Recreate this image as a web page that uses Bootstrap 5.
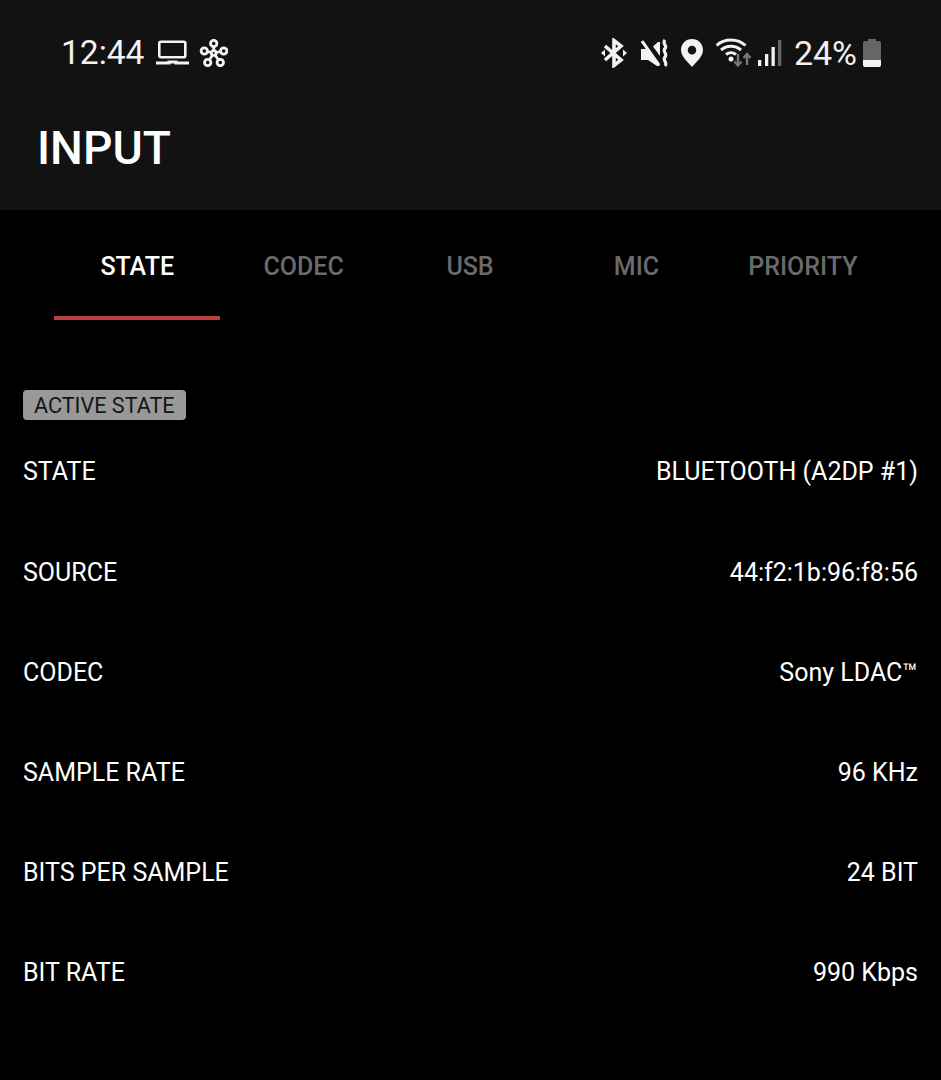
<!DOCTYPE html>
<html lang="en">
<head>
    <meta charset="UTF-8">
    <meta name="viewport" content="width=device-width, initial-scale=1.0">
    <title>Input</title>
    <link rel="stylesheet" href="https://cdn.jsdelivr.net/npm/bootstrap@5.3.0/dist/css/bootstrap.min.css">
    <style>
        body { background: #000; color: #fff; font-family: Roboto, "Liberation Sans", sans-serif; }
        .app-head { background: #121212; height: 210px; }
        .status-bar { height: 105px; padding: 0 59px 0 61px; color: #f2f2f2; }
        .status-time { font-size: 33.5px; line-height: 1; margin-right: 12px; }
        .status-pct { font-size: 34px; line-height: 1; margin: 0 5px 0 11px; }
        .st-laptop { margin-right: 9px; }
        .st-bt { margin-right: 14px; }
        .st-mute { margin-right: 13px; }
        .st-pin { margin-right: 13px; }
        .st-wifi { margin-right: 5px; }
        .app-title { font-size: 46.25px; font-weight: 500; line-height: 1; padding-left: 37px; margin: 0; padding-top: 20px; }
        .tab-strip { padding: 0 55px 0 54px; height: 110px; }
        .tab-item { flex: 1 1 0; text-align: center; font-size: 25px; font-weight: 500; color: #6a6a6a; padding-top: 38px; }
        .tab-item.on { color: #fff; border-bottom: 4px solid #b8423f; }
        .info-wrap { padding: 70px 23px 0; }
        .state-tag { display: block; width: 163px; background: #999; color: #151515; border-radius: 4px; font-size: 21.6px; line-height: 31px; height: 30px; padding: 0 0 0 11px; white-space: nowrap; }
        .info-row { height: 100px; font-size: 25px; line-height: 1; padding-top: 38px; }
        .info-row:first-child { height: 102px; padding-top: 39px; }
    </style>
</head>
<body>
    <div class="app-head">
        <div class="status-bar d-flex align-items-center">
            <span class="status-time">12:44</span>
            <svg width="33" height="26" viewBox="0 0 33 26" fill="none" stroke="#f2f2f2" stroke-width="2.6" class="st-laptop"><rect x="3.3" y="1.8" width="26" height="15.500" rx="1.500"/><path d="M0 23h13v-1h7v1h13" stroke-width="3"/></svg>
            <svg width="30" height="28" viewBox="0 0 30 28" fill="none" stroke="#f2f2f2" stroke-width="2.8"><path d="M15.700 14V4.500M15.700 14L6.300 12M15.700 14l10-2M15.700 14L9.700 23.500M15.700 14l6.600 9.500"/><circle cx="15.700" cy="4.500" r="3.200" fill="#121212"/><circle cx="6.300" cy="12" r="3.200" fill="#121212"/><circle cx="25.700" cy="12" r="3.200" fill="#121212"/><circle cx="9.700" cy="23.500" r="3.200" fill="#121212"/><circle cx="22.300" cy="23.500" r="3.200" fill="#121212"/><circle cx="15.700" cy="14" r="2.400" fill="#121212"/></svg>
            <div class="ms-auto d-flex align-items-center">
                <svg width="26" height="30" viewBox="0 0 26 30" class="st-bt"><path fill="none" stroke="#f2f2f2" stroke-width="3.600" d="M4 8l16 14-7 5.500V2.500L20 8 4 22"/><path fill="#f2f2f2" d="M0 15l4-3.500v7zM26 15l-4-3.500v7z"/></svg>
                <svg width="27" height="28" viewBox="0 0 27 28" class="st-mute"><path fill="#f2f2f2" d="M0 10h5.500L19 27h-3l-9-6H0zM12 7.500L17 3h2v14z"/><path fill="none" stroke="#f2f2f2" d="M1 2l17 24" stroke-width="3"/><path fill="none" stroke="#f2f2f2" stroke-width="3.200" d="M24 1c-3.500 4 3 5.500 0 8.500s3 5.500 0 8.500 3 5.500 0 9"/></svg>
                <svg width="22" height="28" viewBox="0 0 22 28" class="st-pin"><path fill="#f2f2f2" fill-rule="evenodd" d="M11 0C4.800 0 0 4.800 0 11c0 6.500 6.500 11.500 11 17 4.500-5.500 11-10.500 11-17C22 4.800 17.200 0 11 0zm0 6.800a4.300 4.300 0 1 1 0 8.600 4.300 4.300 0 0 1 0-8.600z"/></svg>
                <svg width="36" height="30" viewBox="0 0 36 30" fill="none" stroke="#f2f2f2" stroke-width="3" class="st-wifi"><path d="M.5 7.500C8 0 22 0 29.500 7.500M5 12c6-5 14-5 20 0M10 16.500c3-2.500 7-2.500 10 0"/><circle cx="15" cy="21" r="2.500" fill="#f2f2f2" stroke="none"/><path d="M22 16v11M18.500 23.500l3.500 4 3.500-4" stroke="#777" stroke-width="2.400"/><path d="M31 27V16M27.500 20l3.500-4 3.500 4" stroke="#777" stroke-width="2.400"/></svg>
                <svg width="26" height="28" viewBox="0 0 26 28"><rect x="1" y="21" width="3.300" height="6" fill="#f2f2f2"/><rect x="8" y="15" width="3.300" height="12" fill="#f2f2f2"/><rect x="14.500" y="8" width="3.300" height="19" fill="#f2f2f2"/><rect x="21" y="1" width="3.300" height="26" fill="#666"/></svg>
                <span class="status-pct">24%</span>
                <svg width="20" height="28" viewBox="0 0 20 28"><path fill="#666" d="M6 0h8v2h3a2 2 0 0 1 2 2v17H1V4a2 2 0 0 1 2-2h3z"/><path fill="#f2f2f2" d="M1 21h18v5a2 2 0 0 1-2 2H3a2 2 0 0 1-2-2z"/></svg>
            </div>
        </div>
        <h1 class="app-title">INPUT</h1>
    </div>

    <div class="tab-strip d-flex">
        <div class="tab-item on">STATE</div>
        <div class="tab-item">CODEC</div>
        <div class="tab-item">USB</div>
        <div class="tab-item">MIC</div>
        <div class="tab-item">PRIORITY</div>
    </div>

    <div class="info-wrap">
        <span class="state-tag">ACTIVE STATE</span>
        <div class="info-rows">
            <div class="info-row d-flex justify-content-between"><span>STATE</span><span>BLUETOOTH (A2DP #1)</span></div>
            <div class="info-row d-flex justify-content-between"><span>SOURCE</span><span>44:f2:1b:96:f8:56</span></div>
            <div class="info-row d-flex justify-content-between"><span>CODEC</span><span>Sony LDAC™</span></div>
            <div class="info-row d-flex justify-content-between"><span>SAMPLE RATE</span><span>96 KHz</span></div>
            <div class="info-row d-flex justify-content-between"><span>BITS PER SAMPLE</span><span>24 BIT</span></div>
            <div class="info-row d-flex justify-content-between"><span>BIT RATE</span><span>990 Kbps</span></div>
        </div>
    </div>
    <script src="https://cdn.jsdelivr.net/npm/bootstrap@5.3.0/dist/js/bootstrap.bundle.min.js"></script>
</body>
</html>
